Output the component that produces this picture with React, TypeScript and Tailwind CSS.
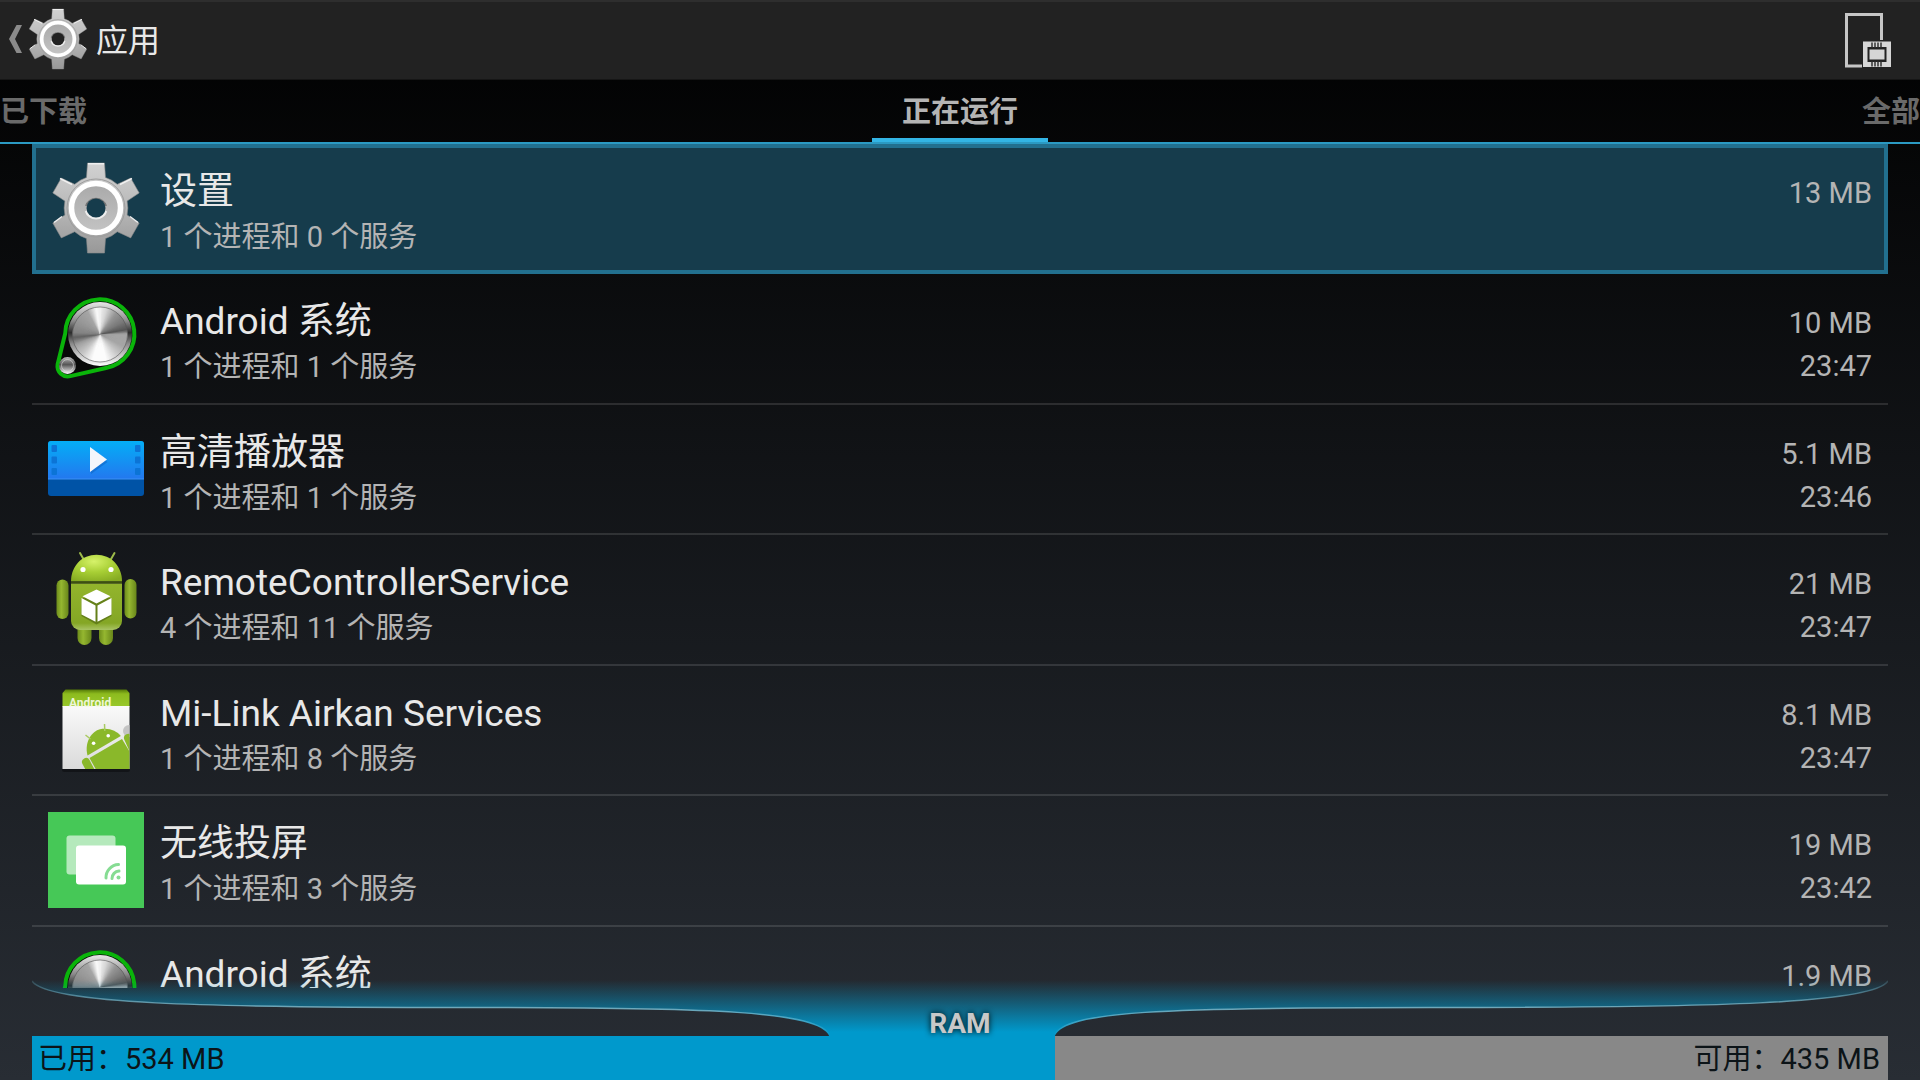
import type { ReactNode } from 'react';

/* ---------- icons ---------- */

function GearIcon({ id, className }: { id: string; className: string }) {
  const fill = `url(#${id}-body)`;
  return (
    <svg viewBox="0 0 96 96" className={className} aria-hidden="true">
      <defs>
        <linearGradient id={`${id}-body`} gradientUnits="userSpaceOnUse" x1="0" y1="3" x2="0" y2="93">
          <stop offset="0" stopColor="#d2d2d2" />
          <stop offset="0.5" stopColor="#b8b8b8" />
          <stop offset="1" stopColor="#989898" />
        </linearGradient>
        <linearGradient id={`${id}-disc`} x1="0" y1="0" x2="0" y2="1">
          <stop offset="0" stopColor="#a9a9a9" />
          <stop offset="1" stopColor="#c4c4c4" />
        </linearGradient>
        <mask id={`${id}-hole`}>
          <rect width="96" height="96" fill="#fff" />
          <circle cx="48" cy="48" r="9.5" fill="#000" />
        </mask>
      </defs>
      <g mask={`url(#${id}-hole)`}>
        <path
          fill={fill}
          stroke="#8a8a8a"
          strokeWidth="0.6"
          strokeLinejoin="round"
          d="M39.5 3h17l1 14.5a32 32 0 0 1 11.8 6.8L82.7 18.1l8.5 14.8-12.1 8.2a32 32 0 0 1 0 13.8l12.1 8.2-8.5 14.8-13.4-6.2a32 32 0 0 1-11.8 6.8l-1 14.5h-17l-1-14.5a32 32 0 0 1-11.8-6.8l-13.4 6.2-8.5-14.8 12.1-8.2a32 32 0 0 1 0-13.8l-12.1-8.2 8.5-14.8 13.4 6.2a32 32 0 0 1 11.8-6.8z"
        />
        <path d="M40 3.8h16M84 18.5l-12 6M12 18.5l12 6M6 62.5l8-6M90 62.5l-8-6" stroke="#efefef" strokeWidth="1.5" fill="none" />
        <circle cx="48" cy="48" r="29" fill="none" stroke="#9d9d9d" strokeWidth="1" />
        <circle cx="48" cy="48" r="24.5" fill={`url(#${id}-disc)`} stroke="#fff" strokeWidth="5.5" />
        <path d="M38 51a10.5 10.5 0 0 0 20 0" fill="none" stroke="#eee" strokeWidth="2.5" />
        <path d="M38 46a10.5 10.5 0 0 1 20 0" fill="none" stroke="#777" strokeWidth="2" />
      </g>
    </svg>
  );
}

const metalStops: [number, number][] = [
  [0, 235], [12, 215], [35, 150], [60, 120], [78, 85], [88, 165], [115, 165], [140, 205],
  [165, 252], [195, 252], [220, 200], [245, 160], [262, 95], [272, 130], [300, 150], [330, 165], [350, 250], [360, 235],
];

function metalShade(angle: number) {
  const next = metalStops.findIndex(([a]) => a > angle);
  const [a0, v0] = metalStops[next - 1];
  const [a1, v1] = metalStops[next];
  const v = Math.round(v0 + ((v1 - v0) * (angle - a0)) / (a1 - a0));
  return `rgb(${v},${v},${v})`;
}

function wedge(angle: number, r: number) {
  const p = (deg: number) => {
    const t = (deg * Math.PI) / 180;
    return `${(r * Math.sin(t)).toFixed(2)} ${(-r * Math.cos(t)).toFixed(2)}`;
  };
  return `M0 0L${p(angle)}L${p(angle + 6)}Z`;
}

function KnobIcon({ id }: { id: string }) {
  const wedges = Array.from({ length: 120 }, (_, i) => i * 3);
  return (
    <svg viewBox="0 0 96 96" className="size-24" aria-hidden="true">
      <defs>
        <linearGradient id={`${id}-rim`} x1="0" y1="0" x2="0" y2="1">
          <stop offset="0" stopColor="#e8e8e8" />
          <stop offset="0.3" stopColor="#8a8a8a" />
          <stop offset="0.48" stopColor="#2c2c2c" />
          <stop offset="0.65" stopColor="#8a8a8a" />
          <stop offset="1" stopColor="#fff" />
        </linearGradient>
        <linearGradient id={`${id}-small`} x1="0" y1="0" x2="0" y2="1">
          <stop offset="0" stopColor="#bbb" />
          <stop offset="0.45" stopColor="#555" />
          <stop offset="1" stopColor="#fff" />
        </linearGradient>
      </defs>
      <path
        d="M17.2 43.5 9.6 74.500a10.3 10.3 0 0 0 12.7 11.6L58 78A34.6 34.6 0 1 0 17.2 43.5Z"
        fill="#080908"
        stroke="#0ab40a"
        strokeWidth="4"
      />
      <circle cx="52" cy="44" r="32" fill={`url(#${id}-rim)`} />
      <g transform="translate(52 44.5)">
        {wedges.map((a) => (
          <path key={a} d={wedge(a, 27.5)} fill={metalShade(a)} />
        ))}
      </g>
      <circle cx="52" cy="44.5" r="27.5" fill="none" stroke="#555" strokeOpacity="0.6" strokeWidth="1" />
      <circle cx="19.5" cy="75.5" r="8.5" fill={`url(#${id}-small)`} />
      <circle cx="19.5" cy="75.5" r="6" fill="none" stroke="#ddd" strokeOpacity="0.6" strokeWidth="1" />
    </svg>
  );
}

function PlayerIcon() {
  return (
    <svg viewBox="0 0 96 96" className="size-24" aria-hidden="true">
      <defs>
        <linearGradient id="player-top" x1="0" y1="0" x2="0" y2="1">
          <stop offset="0" stopColor="#04aef6" />
          <stop offset="1" stopColor="#2378ef" />
        </linearGradient>
      </defs>
      <rect y="20" width="96" height="55" rx="3" fill="#0053a6" />
      <path d="M0 58V23a3 3 0 0 1 3-3h90a3 3 0 0 1 3 3v35z" fill="url(#player-top)" />
      <path d="M0 58h96" stroke="#3a92f5" strokeWidth="1" />
      <g fill="#0c74d6">
        {[24, 35.5, 47].map((y) => (
          <g key={y}>
            <rect x="3.5" y={y} width="5.5" height="7" rx="1" />
            <rect x="87" y={y} width="5.5" height="7" rx="1" />
          </g>
        ))}
      </g>
      <path d="M43 28.5 59.5 41 43 53z" fill="#0b5fc0" opacity="0.5" />
      <path d="M42 26 59 38.5 42 51z" fill="#f3f6fb" />
    </svg>
  );
}

function RobotIcon() {
  return (
    <svg viewBox="0 0 96 96" className="size-24" aria-hidden="true">
      <defs>
        <radialGradient id="robot-head" cx="0.45" cy="0.25" r="0.8">
          <stop offset="0" stopColor="#d6f26a" />
          <stop offset="0.5" stopColor="#a8cf35" />
          <stop offset="1" stopColor="#86ab22" />
        </radialGradient>
        <linearGradient id="robot-body" x1="0" y1="0" x2="0" y2="1">
          <stop offset="0" stopColor="#93b52c" />
          <stop offset="0.85" stopColor="#84a625" />
          <stop offset="1" stopColor="#a9c465" />
        </linearGradient>
        <linearGradient id="robot-limb" x1="0" y1="0" x2="1" y2="0">
          <stop offset="0" stopColor="#6d8c1b" />
          <stop offset="0.4" stopColor="#95b730" />
          <stop offset="1" stopColor="#68861a" />
        </linearGradient>
      </defs>
      <path d="m32 2 4 7M66.5 2l-4 7" stroke="#9cba4a" strokeWidth="2" strokeLinecap="round" />
      <rect x="29.5" y="68" width="14" height="26" rx="7" fill="url(#robot-limb)" />
      <rect x="51" y="68" width="14" height="26" rx="7" fill="url(#robot-limb)" />
      <rect x="8.5" y="28.5" width="12" height="39.5" rx="6" fill="url(#robot-limb)" />
      <rect x="76.5" y="28" width="12" height="39.5" rx="6" fill="url(#robot-limb)" />
      <path d="M23 30.5C23 15 34 3.8 48.5 3.8S74 15 74 30.5z" fill="url(#robot-head)" />
      <path d="M23 32.5h51V70a9 9 0 0 1-9 9H32a9 9 0 0 1-9-9z" fill="url(#robot-body)" />
      <path d="M23 31.2h51" stroke="#3d5010" strokeWidth="1.5" />
      <circle cx="35" cy="18.5" r="2.6" fill="#fff" />
      <circle cx="63" cy="18.5" r="2.6" fill="#fff" />
      <path d="m48.5 40.5 15 7.5v17l-15 8.5L33.5 65V48z" fill="#4c6410" opacity="0.6" />
      <path d="m48.5 38.5 14 6.8-14 7.2-14-7.2zM33.5 47l14 7.4v16.4l-14-7.3zM63.5 47l-14 7.4v16.4l14-7.3z" fill="#fff" />
    </svg>
  );
}

function PackageIcon() {
  return (
    <svg viewBox="0 0 96 96" className="size-24" aria-hidden="true">
      <defs>
        <linearGradient id="pkg-paper" x1="0" y1="0" x2="0" y2="1">
          <stop offset="0" stopColor="#fafafa" />
          <stop offset="1" stopColor="#dadada" />
        </linearGradient>
        <linearGradient id="pkg-top" x1="0" y1="0" x2="0" y2="1">
          <stop offset="0" stopColor="#557a08" />
          <stop offset="0.25" stopColor="#8dbb1e" />
          <stop offset="1" stopColor="#99c92c" />
        </linearGradient>
        <clipPath id="pkg-clip">
          <rect x="14.5" y="24" width="67" height="63" />
        </clipPath>
        <clipPath id="pkg-label">
          <rect x="14.5" y="8" width="67" height="16.5" />
        </clipPath>
      </defs>
      <rect x="14" y="86" width="68" height="4" rx="2" fill="#000" opacity="0.35" />
      <path d="M14.5 25V11l3-3.5h61l3 3.5v14z" fill="url(#pkg-top)" />
      <rect x="14.5" y="24" width="67" height="63" fill="url(#pkg-paper)" />
      <g clipPath="url(#pkg-label)">
        <text x="21" y="25" fontSize="12" fontWeight="700" fontFamily="Roboto, sans-serif" fill="#eef6d8">
          Android
        </text>
      </g>
      <g clipPath="url(#pkg-clip)">
        <circle cx="81" cy="49" r="6" fill="#c4c4c4" />
        <g fill="#8ab82a">
          <path d="M39.5 73.5C36 60 44 49 52 47.2 61 45.5 69 49 72.8 54z" />
          <path d="M41.5 76 74 57l12 20v14H50z" />
          <rect x="34" y="76" width="8" height="24" rx="4" transform="rotate(-28 38 80)" />
          <rect x="76" y="52" width="8" height="24" rx="4" transform="rotate(-24 80 56)" />
        </g>
        <path d="m56.5 42 .3 7M37.5 53l5 4" stroke="#a9cb62" strokeWidth="1.5" />
        <circle cx="45.6" cy="61.3" r="1.8" fill="#fff" />
        <circle cx="60.2" cy="53.7" r="1.8" fill="#fff" />
      </g>
    </svg>
  );
}

function CastIcon() {
  return (
    <svg viewBox="0 0 96 96" className="size-24" aria-hidden="true">
      <rect width="96" height="96" fill="#46c857" />
      <rect x="18.5" y="23.5" width="49" height="39" rx="3" fill="#b5e9bc" />
      <rect x="28" y="33.5" width="50" height="39" rx="3" fill="#fff" />
      <g fill="none" stroke="#86dc93" strokeWidth="3" strokeLinecap="round">
        <path d="M58 66a13 13 0 0 1 12.5-13.5" />
        <path d="M64 66.5a7.5 7.5 0 0 1 7-7.5" />
      </g>
      <circle cx="70.5" cy="65.5" r="2" fill="#86dc93" />
    </svg>
  );
}

function CachedProcessesIcon() {
  return (
    <svg viewBox="0 0 48 56" className="h-14 w-12" aria-hidden="true">
      <path d="M18 53H2.5V1.5h35V27" fill="none" stroke="#c6c6c6" strokeWidth="3" />
      <rect x="19" y="28.5" width="28" height="25.5" fill="#d6d6d6" />
      <rect x="23.5" y="34" width="19" height="15" fill="#222" />
      <rect x="25.5" y="36.5" width="15" height="10" fill="#d6d6d6" />
      <path d="M28 29.5v5M31 29.5v5M34 29.5v5M37 29.5v5M28 48.5v5M31 48.5v5M34 48.5v5M37 48.5v5" stroke="#333" strokeWidth="1.5" />
    </svg>
  );
}

/* ---------- data ---------- */

type Row = { title: string; detail?: string; size: string; time?: string; icon: ReactNode };

const rows: Row[] = [
  { title: '设置', detail: '1 个进程和 0 个服务', size: '13 MB', icon: <GearIcon id="gear-row" className="size-24" /> },
  { title: 'Android 系统', detail: '1 个进程和 1 个服务', size: '10 MB', time: '23:47', icon: <KnobIcon id="knob-a" /> },
  { title: '高清播放器', detail: '1 个进程和 1 个服务', size: '5.1 MB', time: '23:46', icon: <PlayerIcon /> },
  { title: 'RemoteControllerService', detail: '4 个进程和 11 个服务', size: '21 MB', time: '23:47', icon: <RobotIcon /> },
  { title: 'Mi-Link Airkan Services', detail: '1 个进程和 8 个服务', size: '8.1 MB', time: '23:47', icon: <PackageIcon /> },
  { title: '无线投屏', detail: '1 个进程和 3 个服务', size: '19 MB', time: '23:42', icon: <CastIcon /> },
  { title: 'Android 系统', size: '1.9 MB', icon: <KnobIcon id="knob-b" /> },
];

const usedMb = 534;
const freeMb = 435;

/* ---------- page ---------- */

function ProcessRow({ row, selected }: { row: Row; selected: boolean }) {
  return (
    <li className="flex shrink-0 odd:h-[130px] even:h-[131px]">
      <button
        type="button"
        className={
          selected
            ? 'flex w-full items-start border-4 border-[#22708f] bg-[#163c4c] px-3 text-left'
            : 'flex w-full items-start border-b-2 border-[#ffffff1f] px-4 pt-1 text-left'
        }
      >
        <span className="mt-3 shrink-0">{row.icon}</span>
        <span className="mt-5 ml-4 flex min-w-0 flex-1 flex-col">
          <span className="truncate text-[37px] leading-[48px] text-[#e8e8e8]">{row.title}</span>
          <span className="truncate text-[29px] leading-[42px] text-[#b4b4b4]">{row.detail}</span>
        </span>
        <span className="mt-6 flex shrink-0 flex-col text-right text-[29px] leading-[43px] text-[#b4b4b4]">
          <span>{row.size}</span>
          {row.time && <span>{row.time}</span>}
        </span>
      </button>
    </li>
  );
}

export default function App() {
  return (
    <div className="flex h-screen flex-col overflow-hidden bg-linear-to-b/srgb from-black to-[#282d34] font-[Roboto,'Noto_Sans_CJK_SC',sans-serif]">
      <header className="flex h-20 shrink-0 items-center justify-between border-t-2 border-b border-t-[#2e2e2e] border-b-[#161616] bg-[#222222] pr-7 pl-2">
        <button type="button" className="flex items-center pb-1">
          <svg viewBox="0 0 16 28" className="h-7 w-4" aria-hidden="true">
            <path d="M8.5 0H14L7 14l7 14H8.5L1 14z" fill="#8b8b8b" />
          </svg>
          <GearIcon id="gear-bar" className="ml-0.5 size-16" />
          <span className="ml-1.5 pt-1 text-[32px] leading-10 text-[#e8e8e8]">应用</span>
        </button>
        <button type="button" aria-label="显示缓存的进程">
          <CachedProcessesIcon />
        </button>
      </header>

      <nav className="flex h-16 shrink-0 items-stretch justify-between border-b-2 border-[#2b9ac3] text-[29px] leading-10 font-bold text-[#6a6a6a]">
        <button type="button" className="flex-1 pt-0.5 text-left">已下载</button>
        <button type="button" className="w-44 border-b-4 border-[#33b5e5] pt-1.5 text-center text-[#b4b4b4]">正在运行</button>
        <button type="button" className="flex-1 pt-0.5 text-right">全部</button>
      </nav>

      <main className="flex min-h-0 flex-1 flex-col px-8">
        <ul className="flex min-h-0 flex-1 flex-col overflow-hidden">
          {rows.map((row, i) => (
            <ProcessRow key={i} row={row} selected={i === 0} />
          ))}
        </ul>

        <section className="relative -mt-2 shrink-0" aria-label="RAM">
          <div className="grid h-14">
            <svg viewBox="0 0 1856 56" preserveAspectRatio="none" className="col-start-1 row-start-1 h-14 w-full" aria-hidden="true">
              <defs>
                <linearGradient id="ram-glow" gradientUnits="userSpaceOnUse" x1="0" y1="0" x2="0" y2="52">
                  <stop offset="0" stopColor="#0099cc" stopOpacity="0" />
                  <stop offset="1" stopColor="#0099cc" />
                </linearGradient>
                <linearGradient id="ram-edge" gradientUnits="userSpaceOnUse" x1="0" y1="0" x2="0" y2="56">
                  <stop offset="0" stopColor="#6fb0c4" stopOpacity="0.2" />
                  <stop offset="0.5" stopColor="#7ab4c6" stopOpacity="0.9" />
                  <stop offset="1" stopColor="#0099cc" />
                </linearGradient>
              </defs>
              <path
                d="M0 1C14 24 170 27.5 438 27.5C680 27.5 788 31 798 56H1022C1032 31 1130 27.5 1398 27.5C1680 27.5 1842 24 1856 1V0H0Z"
                fill="url(#ram-glow)"
              />
              <path
                d="M0 1C14 24 170 27.5 438 27.5C680 27.5 788 31 798 56M1022 56C1032 31 1130 27.5 1398 27.5C1680 27.5 1842 24 1856 1"
                fill="none"
                stroke="url(#ram-edge)"
                strokeWidth="1.5"
              />
            </svg>
            <h2 className="relative col-start-1 row-start-1 self-end text-center text-[28px] leading-6 font-bold text-[#c8c8c8] [text-shadow:0_0_6px_#000]">
              RAM
            </h2>
          </div>
          <div className="flex h-11 bg-[#888888] text-[29px] leading-[46px] text-[#0c1418]">
            <div className="bg-[#0099cc] pl-1.5 whitespace-nowrap" style={{ width: `${(usedMb / (usedMb + freeMb)) * 100}%` }}>
              已用：{usedMb} MB
            </div>
            <div className="flex-1 pr-2 text-right whitespace-nowrap">可用：{freeMb} MB</div>
          </div>
        </section>
      </main>
    </div>
  );
}
